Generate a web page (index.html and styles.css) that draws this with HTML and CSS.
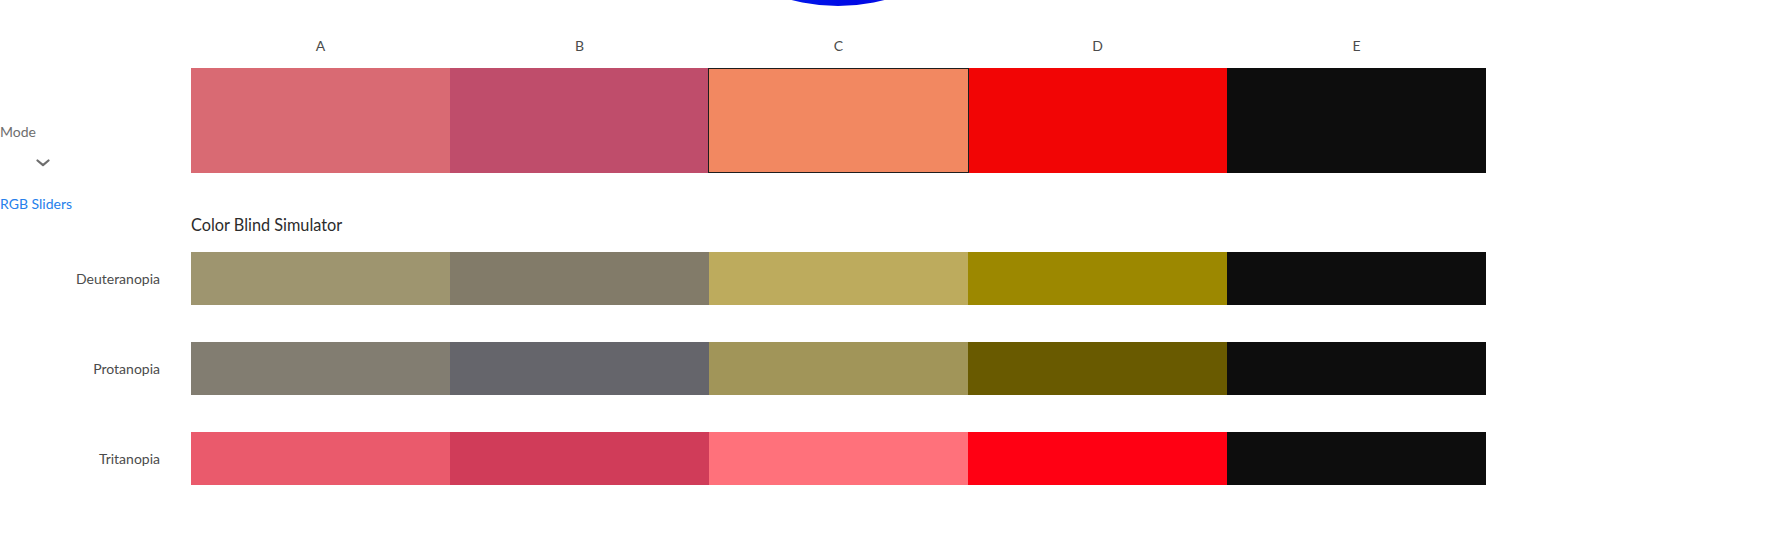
FILE: index.html
```html
<!DOCTYPE html>
<html lang="en">
<head>
<meta charset="utf-8">
<title>Color Theme</title>
<link rel="stylesheet" href="styles.css">
</head>
<body>
<div class="wheel"></div>
<div class="page">
  <div class="top">
    <aside class="sidebar">
      <div class="mode-label">Mode</div>
      <svg class="chevron" width="14" height="8" viewBox="0 0 14 8"><path d="M1.5 1.5 L7 6.2 L12.5 1.5" fill="none" stroke="#6e6e6e" stroke-width="2.2" stroke-linecap="round" stroke-linejoin="round"/></svg>
      <div class="mode-value">RGB Sliders</div>
    </aside>
    <main class="main">
      <div class="letters">
        <span>A</span><span>B</span><span>C</span><span>D</span><span>E</span>
      </div>
      <div class="swatches">
        <div class="sw" style="background:#d96a73"></div>
        <div class="sw" style="background:#bf4d6b"></div>
        <div class="sw sw-active" style="background:#f28861"></div>
        <div class="sw" style="background:#f20505"></div>
        <div class="sw" style="background:#0d0d0d"></div>
      </div>
      <h2 class="title">Color Blind Simulator</h2>
    </main>
  </div>
  <section class="sim">
    <div class="sim-row">
      <div class="sim-label">Deuteranopia</div>
      <div class="strip">
        <div class="sw" style="background:#9e956f"></div>
        <div class="sw" style="background:#827b69"></div>
        <div class="sw" style="background:#bdab5d"></div>
        <div class="sw" style="background:#9c8800"></div>
        <div class="sw" style="background:#0d0d0d"></div>
      </div>
    </div>
    <div class="sim-row">
      <div class="sim-label">Protanopia</div>
      <div class="strip">
        <div class="sw" style="background:#827d71"></div>
        <div class="sw" style="background:#65656b"></div>
        <div class="sw" style="background:#a19559"></div>
        <div class="sw" style="background:#695a00"></div>
        <div class="sw" style="background:#0d0d0d"></div>
      </div>
    </div>
    <div class="sim-row">
      <div class="sim-label">Tritanopia</div>
      <div class="strip">
        <div class="sw" style="background:#ea5a6c"></div>
        <div class="sw" style="background:#d03c59"></div>
        <div class="sw" style="background:#ff717b"></div>
        <div class="sw" style="background:#ff0013"></div>
        <div class="sw" style="background:#0d0d0d"></div>
      </div>
    </div>
  </section>
</div>
</body>
</html>
```

FILE: styles.css
```css
html, body {
  margin: 0;
  padding: 0;
  background: #ffffff;
  overflow: hidden;
}

body {
  font-family: "Lato", "Open Sans", sans-serif;
  color: #4b4b4b;
  width: 1782px;
  height: 541px;
  position: relative;
}

.wheel {
  position: absolute;
  left: 655px;
  top: -360px;
  width: 366px;
  height: 366px;
  border-radius: 50%;
  background: linear-gradient(90deg, #1a4cff 0%, #0022f0 25%, #0008e4 55%, #0a1ff0 80%, #2a55ff 100%);
}

.page {
  display: flex;
  flex-direction: column;
}

.top {
  display: flex;
}

.sidebar {
  width: 191px;
  flex: none;
  padding-top: 123px;
  display: flex;
  flex-direction: column;
  align-items: flex-start;
  font-size: 14px;
  line-height: 17px;
}

.mode-label {
  color: #6e6e6e;
}

.chevron {
  display: block;
  margin-top: 19px;
  margin-left: 36px;
}

.mode-value {
  margin-top: 28px;
  color: #2680eb;
}

.main {
  width: 1295px;
  flex: none;
  padding-top: 36px;
}

.letters {
  display: flex;
  height: 20px;
  font-size: 14px;
  line-height: 20px;
  color: #4b4b4b;
}

.letters span {
  flex: 1;
  text-align: center;
}

.swatches {
  margin-top: 12px;
  display: flex;
  height: 105px;
}

.sw {
  flex: 1;
  height: 100%;
  box-sizing: border-box;
}

.sw-active {
  border: 1px solid #1e1e1e;
}

.title {
  margin: 42px 0 0 0;
  font-size: 16.3px;
  line-height: 20px;
  font-weight: 400;
  color: #2c2c2c;
}

.sim {
  margin-top: 17px;
  display: flex;
  flex-direction: column;
  gap: 37px;
}

.sim-row {
  display: flex;
  align-items: center;
  height: 53px;
}

.sim-label {
  width: 191px;
  flex: none;
  box-sizing: border-box;
  padding-right: 31px;
  text-align: right;
  font-size: 14px;
  color: #4b4b4b;
}

.strip {
  width: 1295px;
  flex: none;
  display: flex;
  height: 53px;
}
```
